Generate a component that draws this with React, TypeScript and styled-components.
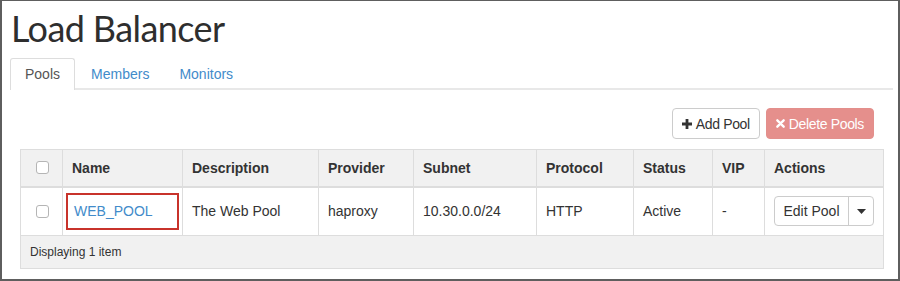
import { styled, createGlobalStyle } from "styled-components";

const GlobalStyle = createGlobalStyle`
  html, body {
    margin: 0;
    padding: 0;
    background: #fff;
  }
  * {
    box-sizing: border-box;
  }
`;

type Col = { label: string; width: number };

const columns: Col[] = [
  { label: "", width: 42 },
  { label: "Name", width: 120 },
  { label: "Description", width: 136 },
  { label: "Provider", width: 95 },
  { label: "Subnet", width: 123 },
  { label: "Protocol", width: 97 },
  { label: "Status", width: 79 },
  { label: "VIP", width: 52 },
  { label: "Actions", width: 119 },
];

const Plus = () => (
  <svg width="10" height="10" viewBox="0 0 10 10">
    <path d="M3.6 0h2.8v3.6H10v2.8H6.4V10H3.6V6.4H0V3.6h3.6z" fill="#333" />
  </svg>
);

const Cross = () => (
  <svg width="9" height="9" viewBox="0 0 10 10">
    <path d="M1.5 1.5l7 7M8.5 1.5l-7 7" stroke="#fff" strokeWidth="2.6" strokeLinecap="round" />
  </svg>
);

const Caret = () => (
  <svg width="9" height="5" viewBox="0 0 9 5">
    <path d="M0 0h9L4.5 5z" fill="#333" />
  </svg>
);

export const App = () => {
  return (
    <>
      <GlobalStyle />
      <Frame>
        <Title>Load Balancer</Title>
        <Tabs>
          <Tab $active>Pools</Tab>
          <Tab>Members</Tab>
          <Tab>Monitors</Tab>
        </Tabs>
        <Toolbar>
          <Button>
            <Plus />
            Add Pool
          </Button>
          <Button $danger>
            <Cross />
            Delete Pools
          </Button>
        </Toolbar>
        <Table>
          <colgroup>
            {columns.map((c, i) => (
              <col key={i} style={{ width: c.width }} />
            ))}
          </colgroup>
          <thead>
            <tr>
              <HeadCell>
                <Check />
              </HeadCell>
              {columns.slice(1).map((c) => (
                <HeadCell key={c.label}>{c.label}</HeadCell>
              ))}
            </tr>
          </thead>
          <tbody>
            <tr>
              <Cell>
                <Check />
              </Cell>
              <Cell>
                <Highlight>
                  <Link>WEB_POOL</Link>
                </Highlight>
              </Cell>
              <Cell>The Web Pool</Cell>
              <Cell>haproxy</Cell>
              <Cell>10.30.0.0/24</Cell>
              <Cell>HTTP</Cell>
              <Cell>Active</Cell>
              <Cell>-</Cell>
              <Cell>
                <Group>
                  <GroupButton>Edit Pool</GroupButton>
                  <GroupButton $caret>
                    <Caret />
                  </GroupButton>
                </Group>
              </Cell>
            </tr>
          </tbody>
          <tfoot>
            <tr>
              <FootCell colSpan={9}>Displaying 1 item</FootCell>
            </tr>
          </tfoot>
        </Table>
      </Frame>
    </>
  );
};
export default App;

const Frame = styled.div`
  width: 900px;
  height: 281px;
  border: 1px solid #5e5e5e;
  border-left-width: 2px;
  border-right-width: 2px;
  border-bottom-width: 2px;
  padding: 0 5px 0 8px;
  font-family: "Liberation Sans", Arial, sans-serif;
  font-size: 14px;
  color: #333;
  overflow: hidden;
`;

const Title = styled.h1`
  margin: 0;
  padding: 5px 0 0 1px;
  height: 57px;
  font-family: Lato, "Open Sans", sans-serif;
  font-weight: 400;
  font-size: 36px;
  letter-spacing: -0.6px;
  line-height: 44px;
  color: #2e2e2e;
`;

const Tabs = styled.div`
  display: flex;
  gap: 2px;
  height: 32px;
  border-bottom: 2px solid #e8e8e8;
`;

const Tab = styled.div<{ $active?: boolean }>`
  height: ${(p) => (p.$active ? "32px" : "30px")};
  padding: 0 ${(p) => (p.$active ? "14px" : "13px")};
  display: flex;
  align-items: center;
  border: 1px solid ${(p) => (p.$active ? "#ddd" : "transparent")};
  border-bottom: none;
  border-radius: 3px 3px 0 0;
  background: ${(p) => (p.$active ? "#fff" : "transparent")};
  color: ${(p) => (p.$active ? "#555" : "#428bca")};
  padding-bottom: ${(p) => (p.$active ? "2px" : "0")};
`;

const Toolbar = styled.div`
  display: flex;
  justify-content: flex-end;
  gap: 6px;
  padding: 18px 19px 0 0;
  height: 59px;
`;

const Button = styled.div<{ $danger?: boolean }>`
  height: 31px;
  padding: 0 9px;
  display: flex;
  align-items: center;
  gap: 4px;
  border-radius: 4px;
  border: 1px solid ${(p) => (p.$danger ? "#e38f8c" : "#ccc")};
  background: ${(p) => (p.$danger ? "#e58f8c" : "#fff")};
  color: ${(p) => (p.$danger ? "#fff" : "#333")};
  white-space: nowrap;
  letter-spacing: -0.35px;
`;

const Table = styled.table`
  margin-left: 10px;
  width: 863px;
  border-collapse: collapse;
  table-layout: fixed;
  border: 1px solid #ddd;
`;

const HeadCell = styled.th`
  height: 37px;
  padding: 0 9px;
  text-align: left;
  font-weight: bold;
  background: #f1f1f1;
  border: 1px solid #ddd;
  border-bottom: 2px solid #ddd;
  color: #333;
`;

const Cell = styled.td`
  height: 49px;
  padding: 0 9px;
  border: 1px solid #ddd;
  background: #fff;
  white-space: nowrap;
`;

const FootCell = styled.td`
  height: 33px;
  padding: 0 9px;
  font-size: 12px;
  background: #f1f1f1;
  border: 1px solid #ddd;
`;

const Check = styled.span`
  display: block;
  margin-left: 6px;
  width: 13px;
  height: 13px;
  border: 1px solid #b5b5b5;
  border-radius: 3px;
  background: #fff;
`;

const Highlight = styled.div`
  margin: 0 -6px;
  height: 37px;
  padding: 0 6px;
  display: flex;
  align-items: center;
  border: 2px solid #c8332b;
`;

const Link = styled.span`
  color: #428bca;
`;

const Group = styled.div`
  display: flex;
  height: 30px;
  border: 1px solid #ccc;
  border-radius: 4px;
  width: 100px;
`;

const GroupButton = styled.div<{ $caret?: boolean }>`
  display: flex;
  align-items: center;
  justify-content: center;
  flex: ${(p) => (p.$caret ? "0 0 25px" : "1")};
  border-left: ${(p) => (p.$caret ? "1px solid #ccc" : "none")};
  color: #333;
`;
